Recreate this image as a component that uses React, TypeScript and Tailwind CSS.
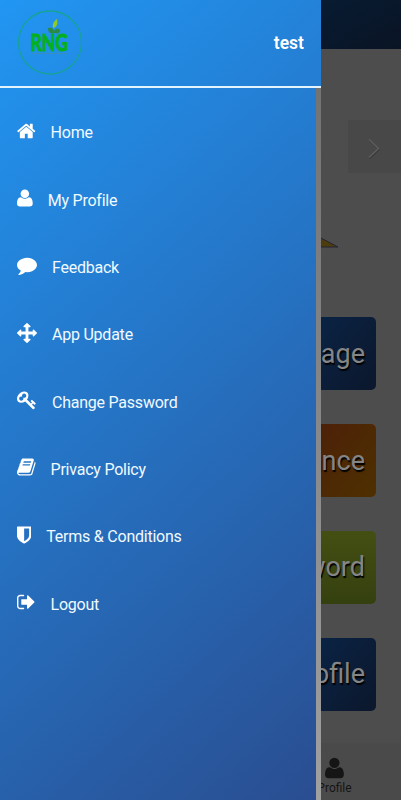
const USER_PATH =
  "M1600 1405q0 120-73 189.5t-194 69.5h-874q-121 0-194-69.5t-73-189.5q0-53 3.5-103.5t14-109 26.5-108.5 43-97.5 62-81 85.5-53.5 111.5-20q9 0 42 21.5t74.5 48 108 48 133.5 21.5 133.5-21.5 108-48 74.5-48 42-21.5q61 0 111.5 20t85.5 53.5 62 81 43 97.5 26.5 108.5 14 109 3.5 103.5zm-320-893q0 159-112.5 271.5t-271.5 112.5-271.5-112.5-112.5-271.5 112.5-271.5 271.5-112.5 271.5 112.5 112.5 271.5z";

const menu = [
  {
    label: "Home",
    box: "64 0 1664 1792",
    path: "M1472 992v480q0 26-19 45t-45 19h-384v-384h-256v384h-384q-26 0-45-19t-19-45v-480q0-1 .5-3t.5-3l575-474 575 474q1 2 1 6zm223-69l-62 74q-8 9-21 11h-3q-13 0-21-7l-692-577-692 577q-12 8-24 7-13-2-21-11l-62-74q-8-10-7-23.5t11-21.5l719-599q32-26 76-26t76 26l244 204v-195q0-14 9-23t23-9h192q14 0 23 9t9 23v408l219 182q10 8 11 21.5t-7 23.5z",
  },
  { label: "My Profile", box: "192 0 1408 1792", path: USER_PATH },
  {
    label: "Feedback",
    box: "0 0 1792 1792",
    path: "M1792 896q0 174-120 321.5t-326 233-450 85.5q-70 0-145-8-198 175-460 242-49 14-114 22-17 2-30.5-9t-17.5-29v-1q-3-4-.5-12t2-10 4.5-9.5l6-9 7-8.5 8-9q7-8 31-34.5t34.5-38 31-39.5 32.5-51 27-59 26-76q-157-89-247.5-220t-90.5-281q0-130 71-248.5t191-204.5 286-136.5 348-50.5q244 0 450 85.5t326 233 120 321.5z",
  },
  {
    label: "App Update",
    box: "0 0 1792 1792",
    path: "M1792 896q0 26-19 45l-256 256q-19 19-45 19t-45-19-19-45v-128h-384v384h128q26 0 45 19t19 45-19 45l-256 256q-19 19-45 19t-45-19l-256-256q-19-19-19-45t19-45 45-19h128v-384h-384v128q0 26-19 45t-45 19-45-19l-256-256q-19-19-19-45t19-45l256-256q19-19 45-19t45 19 19 45v128h384v-384h-128q-26 0-45-19t-19-45 19-45l256-256q19-19 45-19t45 19l256 256q19 19 19 45t-19 45-45 19h-128v384h384v-128q0-26 19-45t45-19 45 19l256 256q19 19 19 45z",
  },
  {
    label: "Change Password",
    box: "0 0 1792 1792",
    path: "M832 512q0-80-56-136t-136-56-136 56-56 136q0 42 19 83-41-19-83-19-80 0-136 56t-56 136 56 136 136 56 136-56 56-136q0-42-19-83 41 19 83 19 80 0 136-56t56-136zm851 704q0 17-49 66t-66 49q-9 0-28.5-16t-36.5-33-38.5-40-24.5-26l-96 96 220 220q28 28 28 68 0 42-39 81t-81 39q-40 0-68-28l-671-671q-176 131-365 131-163 0-265.5-102.5t-102.5-265.5q0-160 95-313t248-248 313-95q163 0 265.5 102.5t102.5 265.5q0 189-131 365l355 355 96-96q-3-3-26-24.5t-40-38.5-33-36.5-16-28.5q0-17 49-66t66-49q13 0 23 10 6 6 46 44.5t82 79.5 86.5 86 73 78 28.5 41z",
  },
  {
    label: "Privacy Policy",
    box: "64 0 1664 1792",
    path: "M1703 478q40 57 18 129l-275 906q-19 64-76.5 107.5t-122.5 43.5h-923q-77 0-148.5-53.5t-99.5-131.5q-24-67-2-127 0-4 3-27t4-37q1-8-3-21.5t-3-19.5q2-11 8-21t16.5-23.5 16.5-23.5q23-38 45-91.5t30-91.5q3-10 .5-30t-.5-28q3-11 17-28t17-23q21-36 42-92t25-90q1-9-2.5-32t.5-28q4-13 22-30.5t22-22.5q19-26 42.5-84.5t27.5-96.5q1-8-3-25.5t-2-26.5q2-8 9-18t18-23 17-21q8-12 16.5-30.5t15-35 16-36 19.5-32 26.5-23.5 36-11.5 47.5 5.5l-1 3q38-9 51-9h761q74 0 114 56t18 130l-274 906q-36 119-71.5 153.5t-128.5 34.5h-869q-27 0-38 15-11 16-1 43 24 70 144 70h923q29 0 56-15.5t35-41.5l300-987q7-22 5-57 38 15 59 43zm-1064 2q-4 13 2 22.5t20 9.5h608q13 0 25.5-9.5t16.5-22.5l21-64q4-13-2-22.5t-20-9.5h-608q-13 0-25.5 9.5t-16.5 22.5zm-83 256q-4 13 2 22.5t20 9.5h608q13 0 25.5-9.5t16.5-22.5l21-64q4-13-2-22.5t-20-9.5h-608q-13 0-25.5 9.5t-16.5 22.5z",
  },
  {
    label: "Terms & Conditions",
    box: "256 0 1280 1792",
    path: "M1344 960v-640h-448v1137q119-63 213-137 235-184 235-360zm192-768v768q0 86-33.5 170.5t-83 150-118 127.5-126.5 103-121 77.5-89.5 49.5-42.5 20q-12 6-26 6t-26-6q-16-7-42.5-20t-89.5-49.5-121-77.5-126.5-103-118-127.5-83-150-33.5-170.5v-768q0-26 19-45t45-19h1152q26 0 45 19t19 45z",
  },
  {
    label: "Logout",
    box: "64 0 1664 1792",
    path: "M704 1440q0 4 1 20t.5 26.5-3 23.5-10 19.5-20.5 6.5h-320q-119 0-203.5-84.5t-84.5-203.5v-704q0-119 84.5-203.5t203.5-84.5h320q13 0 22.5 9.5t9.5 22.5q0 4 1 20t.5 26.5-3 23.5-10 19.5-20.5 6.5h-320q-66 0-113 47t-47 113v704q0 66 47 113t113 47h312l11.5 1 11.5 3 8 5.5 7 9 2 13.5zm928-544q0 26-19 45l-544 544q-19 19-45 19t-45-19-19-45v-288h-448q-26 0-45-19t-19-45v-384q0-26 19-45t45-19h448v-288q0-26 19-45t45-19 45 19l544 544q19 19 19 45z",
  },
];

const cards = [
  { text: "age", color: "bg-linear-to-br from-[#0a2344] to-[#0b172c]" },
  { text: "ance", color: "bg-linear-to-br from-[#4d2108] to-[#4d3000]" },
  { text: "word", color: "bg-linear-to-b from-[#434f12] to-[#354010]" },
  { text: "ofile", color: "bg-linear-to-br from-[#0a2344] to-[#0b172c]" },
];

function Logo() {
  return (
    <svg viewBox="0 0 66 66" className="h-[66px] w-[66px]">
      <circle cx="33" cy="32.5" r="31.5" fill="none" stroke="#16a395" strokeWidth="1.3" />
      <path d="M14 43.5h36" stroke="#3c8fb4" strokeWidth="0.8" />
      <text
        x="13.5"
        y="40.5"
        textLength="37.5"
        lengthAdjust="spacingAndGlyphs"
        fill="#05b020"
        stroke="#05b020"
        strokeWidth="1.1"
        className="font-['Lato'] text-[23px] font-bold"
      >
        RNG
      </text>
      <path d="M31 18c3-1 5 0 6 3 2-3 4-3 6-1 0 3-2 4-5 3-4 1-7 0-7-5z" fill="#2b8a42" />
      <path d="M36 18c-1-4 1-7 4-9 1 5 0 8-4 9z" fill="#8dcc25" />
    </svg>
  );
}

export default function App() {
  return (
    <div className="flex h-[800px] w-[401px] overflow-hidden bg-[#4d4d4d] font-['Roboto',sans-serif]">
      {/* Side drawer */}
      <aside className="flex w-[321px] shrink-0 flex-col bg-linear-[138deg,#2196f3,#2a4d90]">
        <header className="flex h-[88px] shrink-0 items-center justify-between border-b-2 border-[#e4f4fc] px-[17px] text-white">
          <Logo />
          <span className="text-[17.5px] font-semibold">test</span>
        </header>
        <div className="flex min-h-0 flex-1">
          <nav className="flex flex-1 flex-col pt-[11px]">
            {menu.map((item) => (
              <a key={item.label} className="flex h-[67.35px] items-center gap-[15px] pl-[17px] text-base tracking-[-0.23px] text-[#f0faff]">
                <svg viewBox={item.box} className="mb-1 h-5 w-auto" fill="white">
                  <path d={item.path} />
                </svg>
                <span className="pt-px">{item.label}</span>
              </a>
            ))}
          </nav>
          <div className="w-[5px] bg-linear-to-b from-[#737373] to-[#a0a0a0]" />
        </div>
      </aside>

      {/* Dimmed page behind the drawer */}
      <main className="flex w-20 shrink-0 flex-col overflow-hidden">
        <div className="h-[49px] shrink-0 bg-linear-to-br from-[#071b32] to-[#0a1424]" />
        <div className="mt-[71px] ml-[27px] flex h-[53px] shrink-0 items-center bg-[#484848] pl-[19px]">
          <svg viewBox="0 0 14 22" className="mt-[5px] h-[22px] w-[14px]" fill="none">
            <path d="M2.5 2.5l9.5 9-9.5 9" stroke="#383838" strokeWidth="1.5" />
            <path d="M2 1.5l9.5 9-9.5 9" stroke="#5e5e5e" strokeWidth="1.5" />
          </svg>
        </div>
        <svg viewBox="0 0 20 12" className="mt-[63px] h-3 w-5 shrink-0">
          <path d="M-2 1l19 10H-2z" fill="#4d3d0c" stroke="#252537" strokeWidth="1" />
        </svg>
        <div className="mt-[69px] flex shrink-0 flex-col gap-[33.85px] pr-[25px]">
          {cards.map((card) => (
            <div
              key={card.text}
              className={`flex h-[73px] items-center justify-end overflow-hidden rounded-r-[5px] pt-px pr-[11px] text-[27px] text-[#858585] text-shadow-[1px_2px_1px_#000000] ${card.color}`}
            >
              {card.text}
            </div>
          ))}
        </div>
        <div className="mt-[32px] flex flex-1 flex-col items-center bg-[#4a4a4a] pt-[13px] pr-[53px] text-[#151515]">
          <svg viewBox="192 0 1408 1792" className="h-6 w-auto shrink-0" fill="currentColor">
            <path d={USER_PATH} />
          </svg>
          <span className="text-[12px] leading-4">Profile</span>
        </div>
      </main>
    </div>
  );
}
